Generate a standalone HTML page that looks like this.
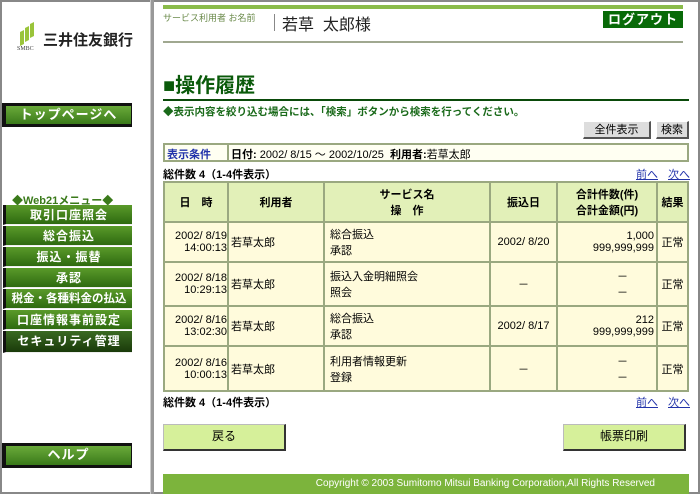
<!DOCTYPE html>
<html><head><meta charset="utf-8"><style>
*{margin:0;padding:0;box-sizing:border-box}
body{width:700px;height:494px;overflow:hidden;background:#fff;font-family:"Liberation Sans","Noto Sans CJK JP",sans-serif;position:relative;font-size:11px;color:#000}
.a{position:absolute}
.frame{left:0;top:0;width:700px;height:494px;border:2px solid #888}
.div{left:150px;top:0;width:4px;height:494px;background:#999;border-left:1px solid #ccc}
.mb{position:absolute;left:3px;width:129px;height:20px;background:linear-gradient(#5a9a2a,#2e6a10);color:#fff;font-weight:bold;font-size:12px;text-align:center;line-height:20px;border-left:3px solid #111;border-bottom:1px solid #eee;letter-spacing:1px}
.bigb{position:absolute;left:2px;width:130px;height:24px;background:#111}
.bigb div{position:absolute;left:4px;top:3px;right:1px;bottom:3px;background:linear-gradient(#6aaa3a,#3a7a1a);color:#fff;font-weight:bold;font-size:13px;text-align:center;line-height:18px;letter-spacing:1px}
table{border-collapse:collapse;position:absolute;left:163px;top:181px;width:526px}
td{border:2px solid #9aa880;background:#fffbdc;font-size:11px;padding:0 2px;vertical-align:middle}
th{border:2px solid #9aa880;background:#e2f0b8;font-size:11px;font-weight:bold;height:40px}
.lnk{color:#2233aa;text-decoration:underline}
.gbtn{position:absolute;background:#d6f09a;border:1px solid #bbb;border-right:2px solid #333;border-bottom:2px solid #333;text-align:center;font-size:12px;line-height:23px}
.sbtn{position:absolute;background:#ddd;border:1px solid #fff;border-right:2px solid #555;border-bottom:2px solid #555;text-align:center;font-size:11px;line-height:16px}
</style></head><body>
<div class="a frame"></div>
<div class="a div"></div>
<!-- logo -->
<svg class="a" style="left:18px;top:22px" width="20" height="24"><path d="M2 10 L6 8 V22 L2 24Z" fill="#9ac43a"/><path d="M7 6 L11 4 V18 L7 20Z" fill="#9ac43a"/><path d="M12 2 L16 0 V14 L12 16Z" fill="#9ac43a"/></svg>
<div class="a" style="left:17px;top:46px;font-size:6px;color:#444;font-family:'Liberation Serif',serif">SMBC</div>
<div class="a" style="left:43px;top:29px;font-size:15px;font-weight:bold;color:#222">三井住友銀行</div>
<div class="bigb" style="top:103px"><div>トップページへ</div></div>
<div class="a" style="left:12px;top:192px;font-size:11px;font-weight:bold;color:#3a7a1a">◆Web21メニュー◆</div>
<div class="mb" style="top:205px">取引口座照会</div>
<div class="mb" style="top:226px">総合振込</div>
<div class="mb" style="top:247px">振込・振替</div>
<div class="mb" style="top:268px">承認</div>
<div class="mb" style="top:289px;font-size:11.5px;letter-spacing:0">税金・各種料金の払込</div>
<div class="mb" style="top:310px">口座情報事前設定</div>
<div class="mb" style="top:331px;background:linear-gradient(#3a6a22,#1a3a0a);height:22px">セキュリティ管理</div>
<div class="bigb" style="top:443px;height:25px"><div>ヘルプ</div></div>
<!-- header -->
<div class="a" style="left:163px;top:5px;width:520px;height:4px;background:#8abb4a"></div>
<div class="a" style="left:163px;top:11px;font-size:9px;color:#6a8a4a">サービス利用者 お名前</div>
<div class="a" style="left:274px;top:14px;width:1px;height:17px;background:#888"></div>
<div class="a" style="left:282px;top:11px;font-size:16px;color:#222">若草&nbsp;&nbsp;太郎様</div>
<div class="a" style="left:603px;top:11px;width:80px;height:17px;background:#086a08;color:#fff;font-weight:bold;font-size:13px;text-align:center;line-height:17px;letter-spacing:1px">ログアウト</div>
<div class="a" style="left:163px;top:41px;width:520px;height:2px;background:#a0a890"></div>
<div class="a" style="left:163px;top:74px;font-size:20px;font-weight:bold;color:#0a5a0a;line-height:24px">■操作履歴</div>
<div class="a" style="left:163px;top:99px;width:526px;height:2px;background:#0a4a0a"></div>
<div class="a" style="left:163px;top:104px;font-size:10.5px;font-weight:bold;color:#1a6a1a">◆表示内容を絞り込む場合には、「検索」ボタンから検索を行ってください。</div>
<div class="sbtn" style="left:583px;top:121px;width:68px;height:18px">全件表示</div>
<div class="sbtn" style="left:656px;top:121px;width:33px;height:18px">検索</div>
<div class="a" style="left:163px;top:143px;width:526px;height:19px;border:2px solid #9aa880;background:#fffff2"></div>
<div class="a" style="left:227px;top:143px;width:2px;height:19px;background:#9aa880"></div>
<div class="a" style="left:167px;top:146px;font-weight:bold;color:#2233aa">表示条件</div>
<div class="a" style="left:231px;top:146px"><b>日付:</b> 2002/ 8/15 ～ 2002/10/25 &nbsp;<b>利用者:</b>若草太郎</div>
<div class="a" style="left:163px;top:166px;font-weight:bold">総件数 4（1-4件表示）</div>
<div class="a lnk" style="left:636px;top:166px">前へ</div><div class="a lnk" style="left:668px;top:166px">次へ</div>
<table>
<tr><th style="width:64px">日　時</th><th style="width:96px">利用者</th><th style="width:166px">サービス名<br>操　作</th><th style="width:67px">振込日</th><th style="width:100px">合計件数(件)<br>合計金額(円)</th><th>結果</th></tr>
<tr style="height:40px"><td style="text-align:right;padding:0">2002/ 8/19<br>14:00:13</td><td>若草太郎</td><td style="padding-left:5px">総合振込<br>承認</td><td style="text-align:center">2002/ 8/20</td><td style="text-align:right">1,000<br>999,999,999</td><td style="text-align:center">正常</td></tr>
<tr style="height:44px"><td style="text-align:right;padding:0">2002/ 8/18<br>10:29:13</td><td>若草太郎</td><td style="padding-left:5px">振込入金明細照会<br>照会</td><td style="text-align:center">－</td><td style="text-align:right;padding-right:28px">－<br>－</td><td style="text-align:center">正常</td></tr>
<tr style="height:40px"><td style="text-align:right;padding:0">2002/ 8/16<br>13:02:30</td><td>若草太郎</td><td style="padding-left:5px">総合振込<br>承認</td><td style="text-align:center">2002/ 8/17</td><td style="text-align:right">212<br>999,999,999</td><td style="text-align:center">正常</td></tr>
<tr style="height:45px"><td style="text-align:right;padding:0">2002/ 8/16<br>10:00:13</td><td>若草太郎</td><td style="padding-left:5px">利用者情報更新<br>登録</td><td style="text-align:center">－</td><td style="text-align:right;padding-right:28px">－<br>－</td><td style="text-align:center">正常</td></tr>
</table>
<div class="a" style="left:163px;top:394px;font-weight:bold">総件数 4（1-4件表示）</div>
<div class="a lnk" style="left:636px;top:394px">前へ</div><div class="a lnk" style="left:668px;top:394px">次へ</div>
<div class="gbtn" style="left:163px;top:424px;width:123px;height:27px">戻る</div>
<div class="gbtn" style="left:563px;top:424px;width:123px;height:27px">帳票印刷</div>
<div class="a" style="left:163px;top:474px;width:526px;height:20px;background:#7cb43c;color:#fff;font-size:10px;line-height:20px;text-align:right;padding-right:34px">Copyright © 2003 Sumitomo Mitsui Banking Corporation,All Rights Reserved</div>
</body></html>
